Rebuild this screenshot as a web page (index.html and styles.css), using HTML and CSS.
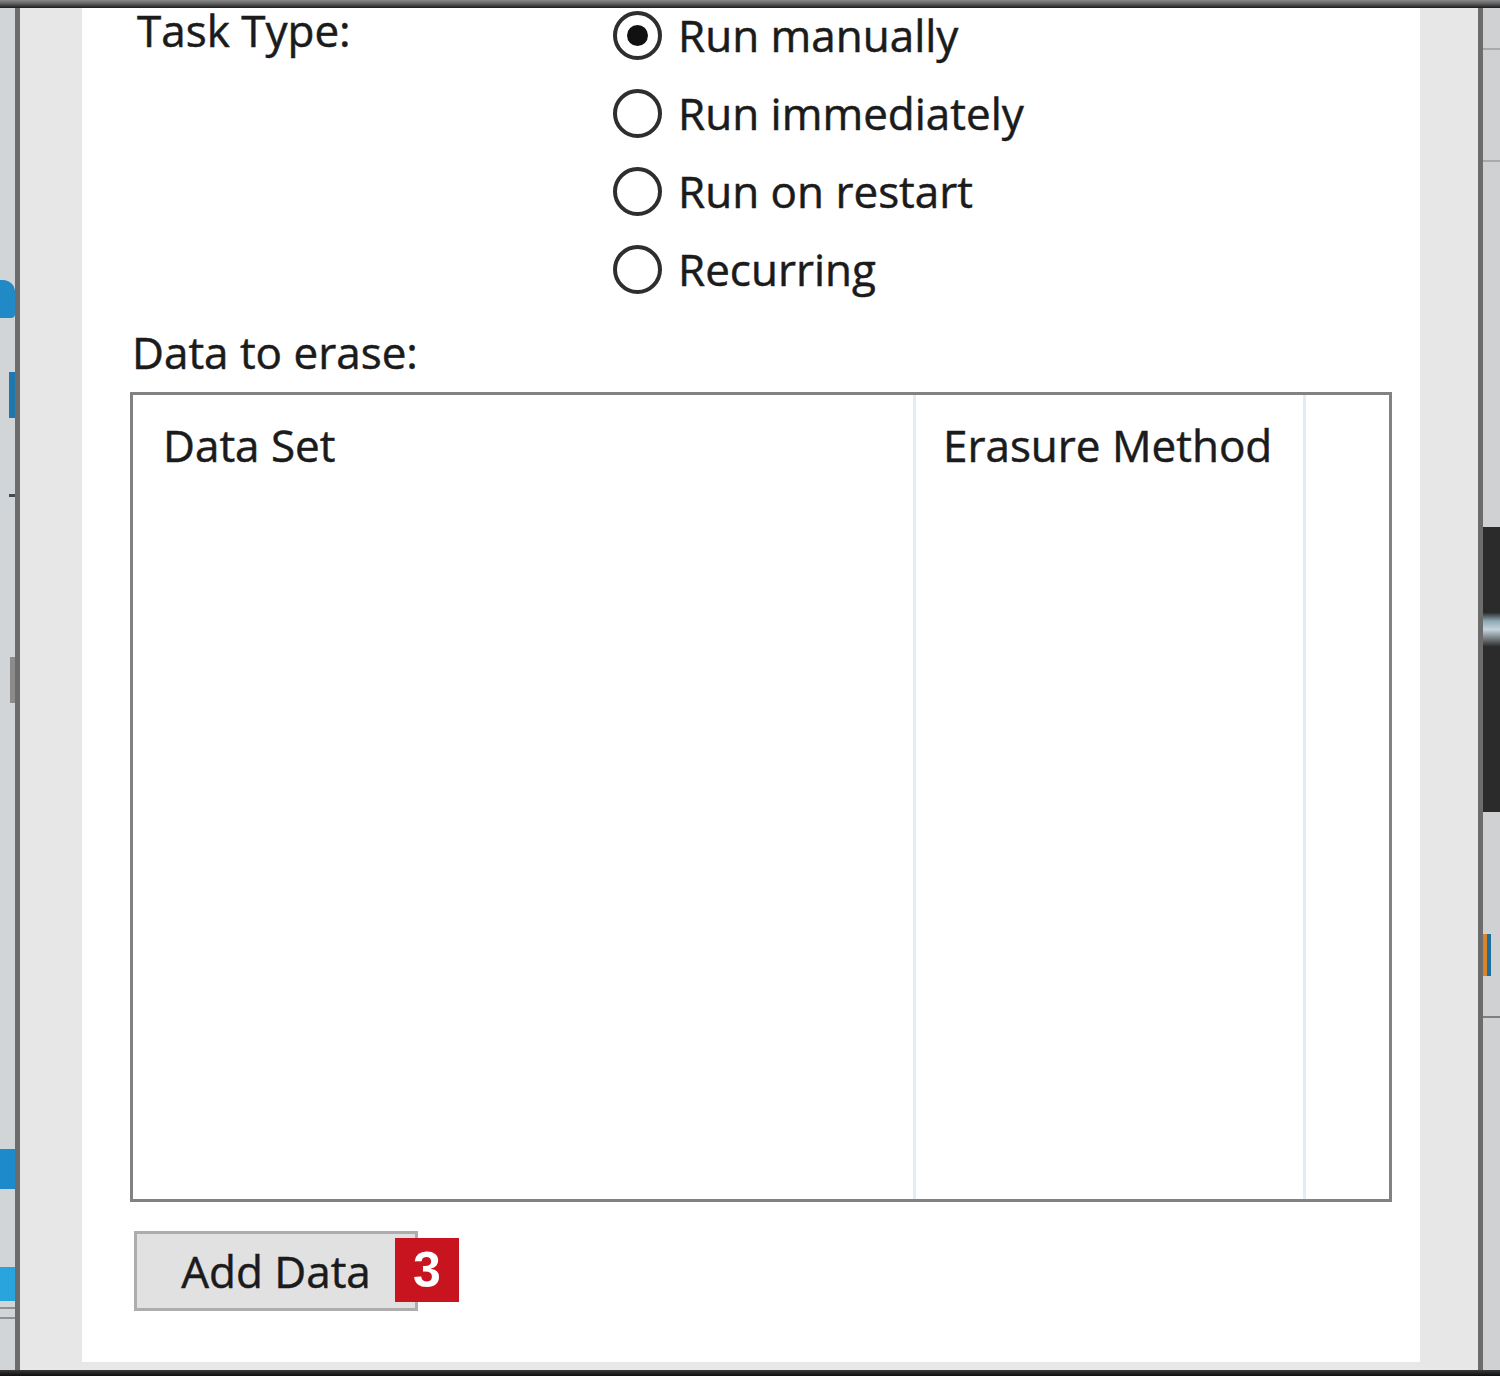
FILE: index.html
```html
<!DOCTYPE html>
<html lang="en">
<head>
  <meta charset="UTF-8" />
  <title>Eraser - Task Properties</title>
  <link rel="stylesheet" href="styles.css">
</head>
<body>

  <div class="screen">
    <div class="topbar"></div>

    <div class="middle">
      <!-- bits of the app window behind the dialog -->
      <div class="bg-left">
        <div class="mark mark-l1"></div>
        <div class="mark mark-l2"></div>
        <div class="mark mark-l3"></div>
        <div class="mark mark-l4"></div>
        <div class="mark mark-l5"></div>
        <div class="mark mark-l6"></div>
        <div class="mark mark-l7"></div>
      </div>

      <div class="dialog">
        <div class="panel">

          <!-- Task type -->
          <div class="task-row">
            <div class="field-label"><span>Task Type:</span></div>
            <div class="radio-list">
              <div class="radio-item"><span class="radio checked"></span><span>Run manually</span></div>
              <div class="radio-item"><span class="radio"></span><span>Run immediately</span></div>
              <div class="radio-item"><span class="radio"></span><span>Run on restart</span></div>
              <div class="radio-item"><span class="radio"></span><span>Recurring</span></div>
            </div>
          </div>

          <!-- Data list -->
          <div class="section-label">Data to erase:</div>
          <div class="listview">
            <div class="col col-set"><div class="col-head">Data Set</div></div>
            <div class="col col-method"><div class="col-head">Erasure Method</div></div>
            <div class="col col-rest"></div>
          </div>

          <div class="actions">
            <div class="btn-wrap">
              <button class="btn">Add Data</button>
              <span class="badge">3</span>
            </div>
          </div>

        </div>
      </div>

      <div class="bg-right">
        <div class="mark mark-r1"></div>
        <div class="mark mark-r2"></div>
        <div class="mark mark-r3"></div>
        <div class="mark mark-r4"></div>
        <div class="mark mark-r5"></div>
      </div>
    </div>

    <div class="bottombar"></div>
  </div>

</body>
</html>
```

FILE: styles.css
```css
body {
  margin: 0;
  font-family: "Open Sans", "Noto Sans", sans-serif;
  color: #1b1b1b;
  overflow: hidden;
}

.screen {
  width: 1500px;
  height: 1376px;
  display: flex;
  flex-direction: column;
}

.topbar {
  height: 8px;
  background: linear-gradient(#8a8a8a, #5a5a5a 50%, #1c1c1c);
}

.bottombar {
  height: 6px;
  background: linear-gradient(#3a3a3a, #0e0e0e);
}

.middle {
  flex: 1;
  display: flex;
  overflow: hidden;
}

/* background window strips */
.bg-left {
  width: 15px;
  background: #d2d5d7;
  display: flex;
  flex-direction: column;
  align-items: flex-end;
}

.bg-right {
  width: 17px;
  background: #cfd1d2;
  display: flex;
  flex-direction: column;
}

.mark {
  flex-shrink: 0;
}

.mark-l1 { margin-top: 272px; width: 15px; height: 38px; background: #2089c6; border-radius: 0 12px 4px 0; }
.mark-l2 { margin-top: 54px; width: 6px; height: 46px; background: #1f78ad; }
.mark-l3 { margin-top: 76px; width: 6px; height: 3px; background: #3c4c58; }
.mark-l4 { margin-top: 160px; width: 5px; height: 46px; background: #8b8b8b; }
.mark-l5 { margin-top: 446px; width: 15px; height: 40px; background: #1d8bcb; }
.mark-l6 { margin-top: 78px; width: 15px; height: 34px; background: #29a4dc; }
.mark-l7 { margin-top: 6px; width: 15px; height: 8px; border-top: 2px solid #8f9295; border-bottom: 2px solid #8f9295; }

.mark-r1 { margin-top: 40px; height: 2px; background: #a8aaac; }
.mark-r2 { margin-top: 110px; height: 2px; background: #a8aaac; }
.mark-r3 { margin-top: 365px; height: 285px; background: linear-gradient(#2b2b2b 30%, #8fa9b6 33%, #c5d4dc 36%, #2b2b2b 42%); }
.mark-r4 { margin-top: 122px; height: 42px; width: 8px; background: linear-gradient(90deg, #d8842a 50%, #1b6e9e 50%); }
.mark-r5 { margin-top: 40px; height: 2px; background: #7d7f80; }

/* dialog frame */
.dialog {
  flex: 1;
  display: flex;
  background: #e7e7e7;
  border-left: 5px solid #6c6c6c;
  border-right: 5px solid #6c6c6c;
  padding: 0 58px 8px 62px;
}

.panel {
  flex: 1;
  background: #fff;
  padding: 0 28px 0 48px;
  overflow: hidden;
  font-size: 44px;
  line-height: 52px;
  -webkit-text-stroke: 0.5px currentColor;
}

.task-row {
  display: flex;
  margin-top: -12px;
}

.field-label {
  width: 476px;
  height: 78px;
  margin-left: 7px;
  display: flex;
  align-items: center;
  line-height: 44px;
  padding-bottom: 10px;
  box-sizing: border-box;
}

.radio-list {
  display: flex;
  flex-direction: column;
}

.radio-item {
  display: flex;
  align-items: center;
  gap: 16px;
  height: 78px;
  line-height: 44px;
}

.radio {
  width: 41px;
  height: 41px;
  border: 4px solid #2e2e2e;
  border-radius: 50%;
  display: flex;
  align-items: center;
  justify-content: center;
}

.radio.checked::after {
  content: "";
  width: 21px;
  height: 21px;
  border-radius: 50%;
  background: #111;
}

.section-label {
  margin-top: 18px;
  margin-left: 2px;
}

.listview {
  margin-top: 14px;
  height: 804px;
  border: 3px solid #828282;
  display: flex;
}

.col {
  border-right: 3px solid #e4ecf1;
}

.col-set {
  width: 780px;
}

.col-method {
  width: 387px;
}

.col-rest {
  flex: 1;
  border-right: none;
}

.col-head {
  padding: 24px 0 0 30px;
  white-space: nowrap;
}

.col-method .col-head {
  padding-left: 27px;
}

.actions {
  margin-top: 29px;
  display: flex;
}

.btn-wrap {
  position: relative;
  margin-left: 4px;
}

.btn {
  width: 284px;
  height: 80px;
  border: 3px solid #adadad;
  background: #e1e1e1;
  font-family: inherit;
  font-size: 44px;
  color: #1b1b1b;
  -webkit-text-stroke: 0.5px currentColor;
  padding: 0;
}

.badge {
  position: absolute;
  left: 261px;
  top: 7px;
  width: 64px;
  height: 64px;
  background: #c8141f;
  color: #fff;
  font-family: "Liberation Sans", Arial, sans-serif;
  font-weight: bold;
  font-size: 50px;
  line-height: 64px;
  text-align: center;
  -webkit-text-stroke: 0;
}
```
